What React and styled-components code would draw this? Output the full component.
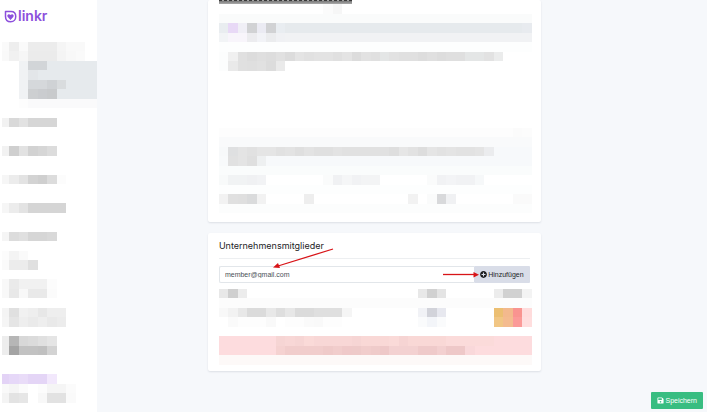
import React from 'react';
import styled, { createGlobalStyle } from 'styled-components';
import { FaPlusCircle, FaSave } from 'react-icons/fa';

const GlobalStyle = createGlobalStyle`
  * {
    box-sizing: border-box;
  }

  body {
    margin: 0;
    background: #f6f8fb;
    color: #1d1d1f;
    font-family: Inter, 'Open Sans', sans-serif;
  }
`;

const Page = styled.div`
  display: flex;
  min-height: 100vh;
`;

const Sidebar = styled.aside`
  flex: 0 0 97px;
  padding: 8px 0 0 2px;
  background: #fff;
`;

const Logo = styled.a`
  display: flex;
  align-items: center;
  gap: 1px;
  height: 16px;
  margin: 0 0 18px 2px;
  color: #8c4fdc;
  font-size: 14px;
  font-weight: 600;
  line-height: 16px;
  text-decoration: none;
`;

const Main = styled.main`
  flex: 1;
  display: grid;
  grid-template-columns: 2fr 6fr 3fr;
`;

const Column = styled.div`
  grid-column: 2;
  display: flex;
  flex-direction: column;
  gap: 11px;
`;

const Card = styled.section`
  padding: 0 9px ${props => props.$bottom}px 11px;
  border-radius: 2px;
  background: #fff;
  box-shadow: 0 1px 2px rgba(40, 50, 70, 0.12);
`;

const CutHeading = styled.div`
  width: 133px;
  height: 4px;
  border-top: 1px dashed #3a3a3a;
  background: linear-gradient(#777, #aaa);
`;

const CardHeader = styled.header`
  margin-right: 2px;
  padding: 5px 0 4px;
  border-bottom: 1px solid #edeff1;
`;

const Title = styled.h2`
  margin: 0;
  font-size: 9px;
  font-weight: 400;
  line-height: 16px;
`;

const MemberForm = styled.form`
  position: relative;
  display: flex;
  height: 17px;
  margin: 7px 2px 6px 0;
`;

const MemberInput = styled.input`
  flex: 1;
  min-width: 0;
  padding: 0 5px;
  border: 1px solid #e2e6ea;
  border-right: 0;
  border-radius: 2px 0 0 2px;
  background: #fff;
  color: #495057;
  font-family: 'Liberation Sans', sans-serif;
  font-size: 7px;
  outline: none;
`;

const Button = styled.button`
  display: flex;
  align-items: center;
  justify-content: center;
  gap: 1px;
  height: 17px;
  padding: 0 6px;
  border: 0;
  border-radius: 1px;
  background: ${props => props.$color || '#d9dde8'};
  color: ${props => props.$color ? '#fff' : '#1d1d1f'};
  font-family: 'Liberation Sans', sans-serif;
  font-size: 7px;
  white-space: nowrap;
  cursor: pointer;
`;

const SaveBar = styled.div`
  position: fixed;
  right: 4px;
  bottom: 3px;
`;

const LongArrow = styled.svg`
  position: absolute;
  top: -18px;
  left: 54px;
  pointer-events: none;
`;

const ShortArrow = styled.svg`
  position: absolute;
  top: 5px;
  right: 51px;
  pointer-events: none;
`;

const Mosaic = styled.div`
  display: grid;
  grid-template-columns: ${props => props.$columns};
  grid-auto-rows: ${props => props.$rows};
`;

const Cell = styled.span.attrs(props => ({
  style: { gridArea: props.$area, background: props.$tone },
}))``;

// Each line is [row, first column, tones]. A two digit tone is a grey,
// "*n" stretches it over n columns and "-" leaves a column empty.
const Censored = ({ lines, columns, rows }) => {
  const cells = [];
  lines.forEach(([row, start, tones]) => {
    let column = start + 1;
    tones.split(' ').forEach(item => {
      const [tone, times] = item.split('*');
      const span = Number(times || 1);
      if (tone !== '-') {
        cells.push({
          area: `${row + 1} / ${column} / span 1 / span ${span}`,
          tone: `#${tone.length === 2 ? tone.repeat(3) : tone}`,
        });
      }
      column += span;
    });
  });

  return (
    <Mosaic $columns={columns} $rows={rows} aria-hidden="true">
      {cells.map(cell => (
        <Cell key={cell.area} $area={cell.area} $tone={cell.tone} />
      ))}
    </Mosaic>
  );
};

const menu = [
  [0, 0, 'fa ee fa ec*3 f5 f9*2'],
  [1, 0, 'f9 f1 f6 eb*3 f4 f8 fa'],
  [2, 2, 'f0f2f4 d2d5d8*2 e6eaed*6'],
  [3, 2, 'f0f2f4 e3e6e9 e6eaed*7'],
  [4, 2, 'f0f2f4 d5d8db*2 cfd2d5 d9dcde e6eaed*4'],
  [5, 2, 'f0f2f4 cdcfd1 cacccf c8cacc e6eaed*5'],
  [6, 2, 'fd fafafb*7'],
  [8, 0, 'f2 d9 e2 d6*3'],
  [11, 0, 'f2 cf e2 d2 d6 dc'],
  [14, 0, 'f6 ec e3 d3 cf dc fc'],
  [17, 0, 'f6 ec e3 d5*4'],
  [20, 0, 'f5 dc e0 d6*2 d9'],
  [22, 0, 'fc f4 fa'],
  [23, 0, 'fa ec*2 e0'],
  [25, 0, 'f8 ea f1*3 fc'],
  [26, 0, 'f8 e8 f8 e9*2 fb'],
  [28, 0, 'f4 e0 f1 ee e7 ee*2'],
  [29, 0, 'f5 e5 ee ea ee e9 ec'],
  [31, 0, 'ed b6 d8 db e0 e5'],
  [32, 0, 'ed a4 c2*2 c0 d3'],
  [35, 0, 'e3d3f6 e6d8f8 e9dcf8 e4d5f6*2 f2e8fc'],
  [36, 0, 'f9 f5 fb - fc f5*2 fb'],
  [37, 0, 'f4 e3 e6 - f8 e2*2 fa'],
];

const editor = [
  [0, 11, 'fb f6'],
  [1, 0, 'fafbfb*33'],
  [2, 0, 'e9edf0 e8d9f6 f0eff6 d1d2d4 ebebf3 d1d2d4 e9edf1 e6eaed*25 e8ebef'],
  [3, 0, 'f2f4f6 f8f5fb*2 ececef f2f3f7 ebecee f0f1f4 f1f2f4*26'],
  [4, 0, 'fdfefe*33'],
  [5, 0, 'fcfdfd f0 e0 dc df dd e1 dc e4 e1 e3*2 e0 e4 dc e2 e0 e4e6e6 e2 e0*2 dd e0 dd df*2 e4e6e6*2 e2 ebecec'],
  [6, 0, 'fcfdfd e9 e0 df e1 dc ea'],
  [13, 0, 'fd*31 fb fc'],
  [14, 0, 'f9fafb*33'],
  [15, 0, 'f7f9fa dfe0e1 e4 e1 e5*2 e1 e3 df e3 e0*2 e3 e1*5 de e6 e2 dd e5 e2 e4 e2*2 e4 ebecee f7f9fb*4'],
  [16, 0, 'f8fafb e1 e4 df eef0f1 f7f9fb*28'],
  [17, 0, 'fafcfc*33'],
  [18, 0, 'f8fafa f1f3f4*2 f0f1f3 f2f3f5 -*6 fafbfb f0f1f3 f5f6f7 f1f2f4 f3f4f5*2 -*5 fafbfb f1f2f4 f3f4f6 f1f2f4*2 f6f8f9'],
  [19, 0, 'fdfefe*33'],
  [20, 0, 'f2 e0 df dadbdc f2 -*4 ee -*10 f2 - fafbfb d8d9db f0f1f3 -*6 fa*2'],
  [21, 0, 'fcfdfd*33'],
];

const members = [
  [0, 0, 'e8 cf ec -*18 e8 d1 e4 -*5 ec d1*2 f3'],
  [1, 0, 'fcfcfc*33'],
  [2, 0, 'f8 f2 e8 db*2 e8 de e7 db*2 df*3 f5 -*7 f1f2f6 d2d3da e7e8ef -*5 ecbf72 f3b98d f99490 ffdcdc'],
  [3, 0, '- fa fd*3 f9 - fd*2 fa f9 fd*2 -*8 fafbfc f3f5f9 fafbfc -*5 f1c684 f4bb8f fb9a98 ffdede'],
  [5, 0, 'fddcde*6 f6d5d4 f8d7d6 f6d5d4 fadad8 f8d7d6*4 f6d5d4 f9d8d6*3 fadad8 f6d4d3 f9d8d6*4 fbdbda*5 fddcde*5'],
  [6, 0, 'fddcde*6 f5d2d1 f1cdcc*4 efcac9 f1cdcc efc9c9 eecac9 f1cdcc efcbca eec8c8 f3d1d1*3 efcaca*2 f3d0d0 eec8c8*2 f9d8da fddcde*6'],
  [7, 0, 'fdf9f8*33'],
];

const LogoIcon = () => (
  <svg width="13" height="13" viewBox="0 0 26 26" fill="none">
    <path
      d="M3 3h11c5.500 0 9.500 4 9.500 10S19.500 23.500 13.500 23.500 3 19.500 3 13z"
      stroke="currentColor"
      strokeWidth="3"
      strokeLinejoin="round"
    />
    <path
      d="M13 20 7.500 14C4.500 10.500 9 6 13 9.800c4-3.800 8.500.7 5.500 4.200z"
      fill="currentColor"
    />
  </svg>
);

const App = () => (
  <>
    <GlobalStyle />
    <Page>
      <Sidebar>
        <Logo href="#">
          <LogoIcon />
          linkr
        </Logo>
        <Censored lines={menu} columns="7px repeat(8, 1fr) 12px" rows="9px 10px" />
      </Sidebar>
      <Main>
        <Column>
          <Card $bottom={9}>
            <CutHeading />
            <Censored lines={editor} columns="repeat(33, 1fr)" rows="10px 9px" />
          </Card>
          <Card $bottom={6}>
            <CardHeader>
              <Title>Unternehmensmitglieder</Title>
            </CardHeader>
            <MemberForm onSubmit={e => e.preventDefault()}>
              <MemberInput type="email" aria-label="E-Mail" defaultValue="member@gmail.com" />
              <Button type="submit">
                <FaPlusCircle />
                Hinzufügen
              </Button>
              <LongArrow width="62" height="22" viewBox="0 0 62 22">
                <path d="M60 1 5 18" stroke="#d81418" strokeWidth="1.300" />
                <path d="M0 19.500 5 15l2 5z" fill="#d81418" />
              </LongArrow>
              <ShortArrow width="36" height="7" viewBox="0 0 36 7">
                <path d="M0 3.500h32" stroke="#d81418" strokeWidth="1.300" />
                <path d="M36 3.800 30.500 1v5.500z" fill="#d81418" />
              </ShortArrow>
            </MemberForm>
            <Censored lines={members} columns="repeat(33, 1fr)" rows="9px 10px" />
          </Card>
        </Column>
      </Main>
    </Page>
    <SaveBar>
      <Button type="button" $color="#38bd81">
        <FaSave />
        Speichern
      </Button>
    </SaveBar>
  </>
);

export default App;
